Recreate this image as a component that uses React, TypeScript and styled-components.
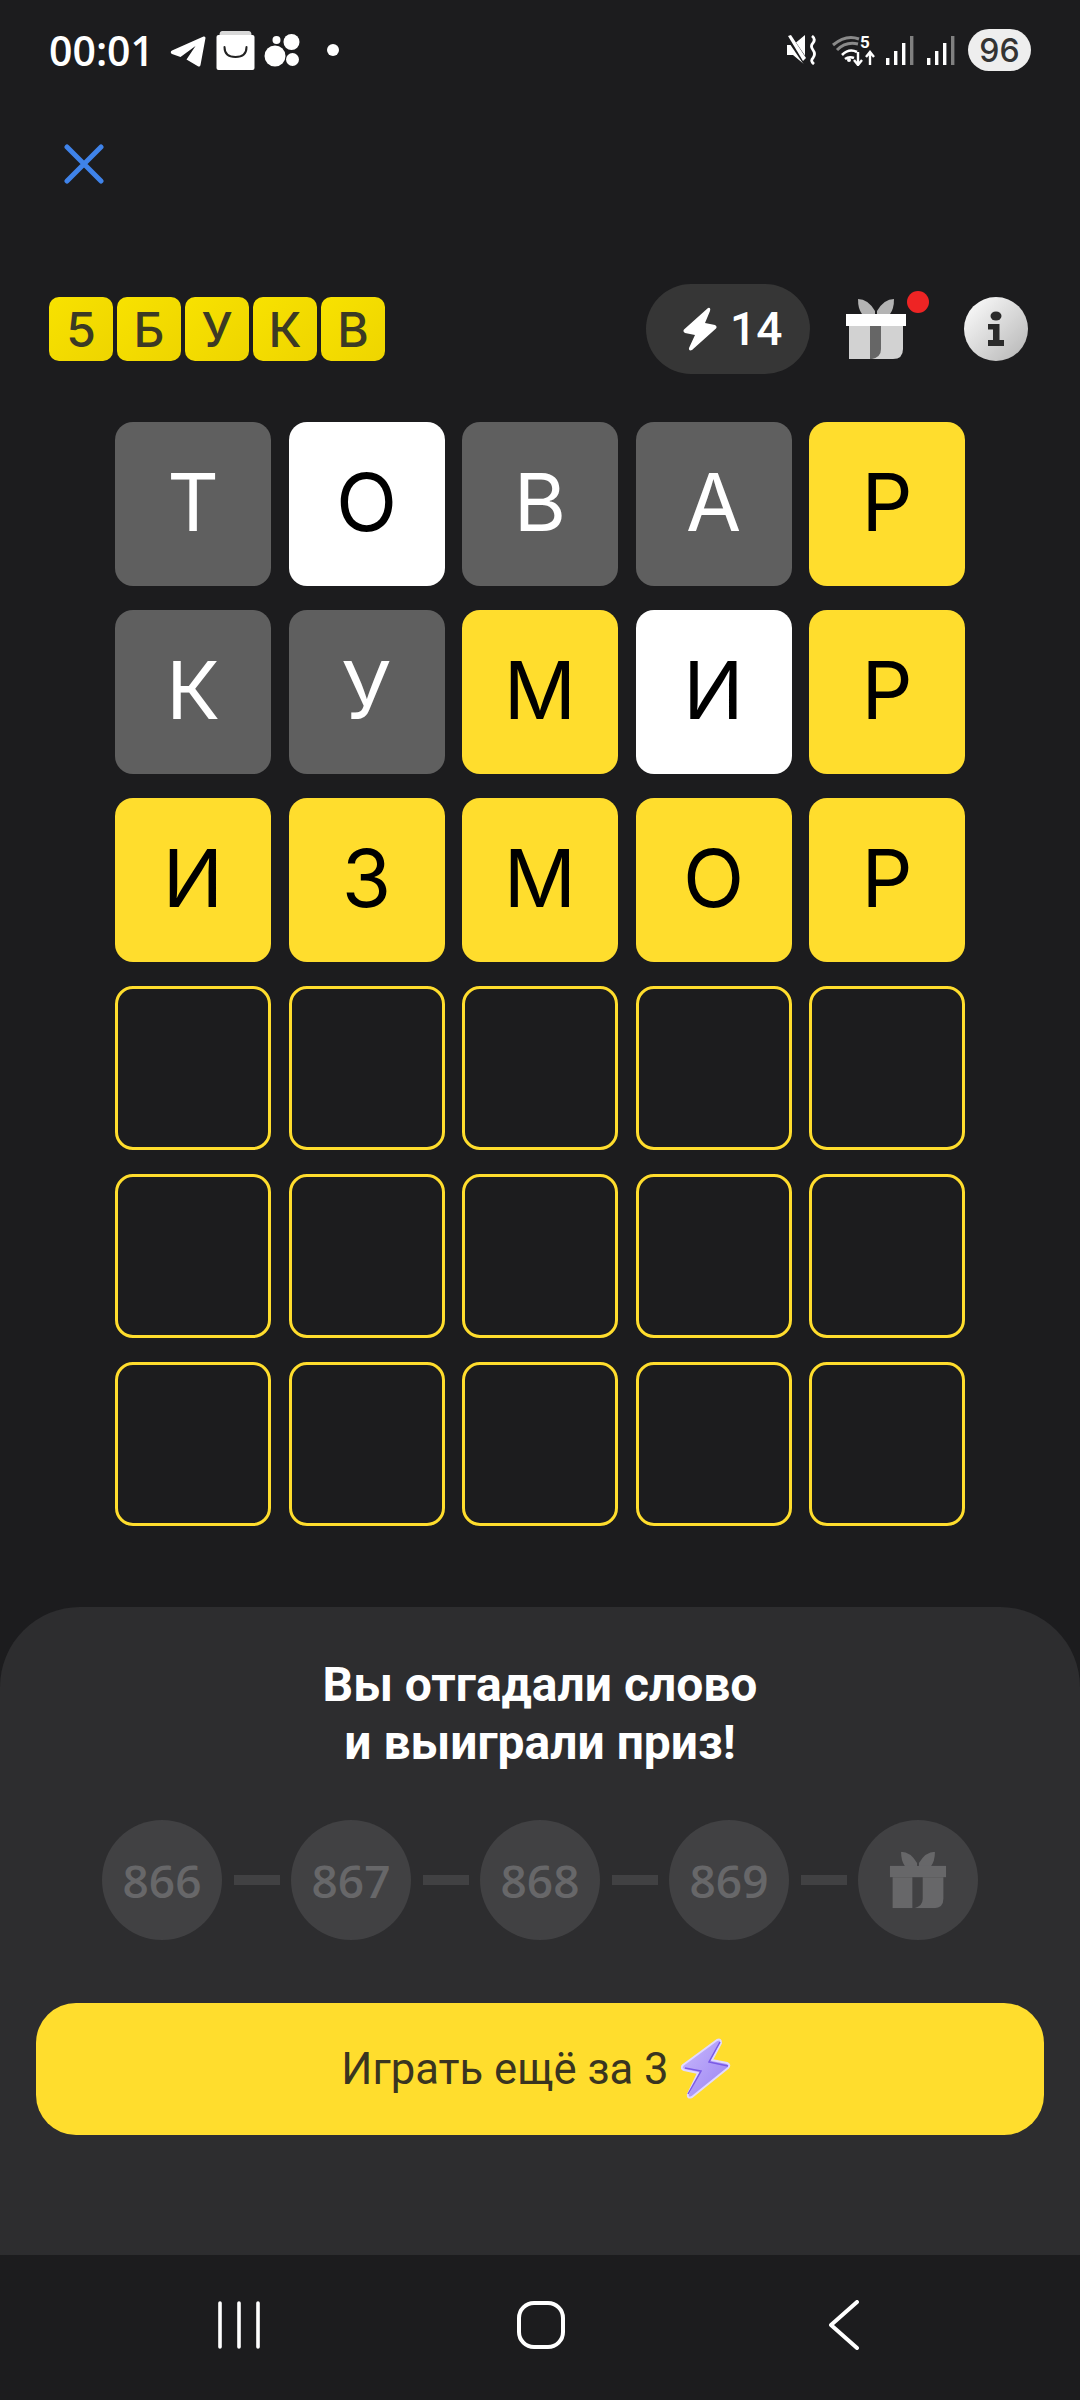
import React from 'react';
import styled, { createGlobalStyle } from 'styled-components';

type CellState = 'miss' | 'present' | 'hit' | 'empty';

type Cell = { letter: string; state: CellState };

const makeRow = (letters: string, states: CellState[]): Cell[] =>
    letters.split('').map((letter, i) => ({ letter, state: states[i] }));

const guesses: Cell[][] = [
    makeRow('ТОВАР', ['miss', 'present', 'miss', 'miss', 'hit']),
    makeRow('КУМИР', ['miss', 'miss', 'hit', 'present', 'hit']),
    makeRow('ИЗМОР', ['hit', 'hit', 'hit', 'hit', 'hit']),
];

const emptyRow: Cell[] = Array.from({ length: 5 }, () => ({ letter: '', state: 'empty' as CellState }));
const rows = [...guesses, emptyRow, emptyRow, emptyRow];

const cellBackground: Record<CellState, string> = {
    miss: '#5f5f5f',
    present: '#ffffff',
    hit: '#ffdd2d',
    empty: 'transparent',
};

function GiftIcon({ lid, box, ribbon, bow }: { lid: string; box: string; ribbon: string; bow: string }) {
    return (
        <svg width="60" height="60" viewBox="0 0 60 60">
            <path d="M12 0 Q22 0 29 12 L29 15 L16 15 Q12 10 12 0Z" fill={bow} />
            <path d="M48 0 Q38 0 31 12 L31 15 L44 15 Q48 10 48 0Z" fill={bow} />
            <rect x="0" y="15" width="60" height="12" fill={lid} />
            <path d="M3 27 H57 V50 Q57 60 47 60 H3Z" fill={box} />
            <path d="M24 27 H35 V50 Q35 58 26 60 H24Z" fill={ribbon} />
        </svg>
    );
}

function BoltIcon() {
    return (
        <svg width="34" height="44" viewBox="0 0 34 44">
            <path
                d="M25 1 Q28 0 27 4 L22 16 L32 18 Q34.5 19.5 33 21.5 L9 43 Q5.5 44.5 6 41 L12 28 L2 26 Q-.5 24.5 1 22.5Z"
                fill="#fff"
            />
        </svg>
    );
}

function PurpleBolt() {
    return (
        <svg width="50" height="62" viewBox="0 0 50 62">
            <defs>
                <linearGradient id="purple" x1="0" y1="0" x2="1" y2="1">
                    <stop offset="0" stopColor="#c9b9fc" />
                    <stop offset="1" stopColor="#9a82f2" />
                </linearGradient>
            </defs>
            <path
                d="M36 2 Q40 0 40 5 L31 22 L46 25 Q50 27 47 30 L11 59 Q6 61 7 56 L17 35 L3 32 Q-1 30 2 27Z"
                fill="url(#purple)"
                stroke="#e2d9ff"
                strokeWidth="2"
                strokeLinejoin="round"
            />
            <path d="M7 56 L20 33 L4 30 M47 28 L28 24 L39 4" fill="none" stroke="#7a5ae6" strokeWidth="1.5" />
        </svg>
    );
}

function WifiIcon() {
    return (
        <svg width="45" height="31" viewBox="0 0 45 31">
            <path d="M1 10 Q14 -1 27 4" fill="none" stroke="#8a8a8a" strokeWidth="3" />
            <path d="M5 15 Q14 6 26 9" fill="none" stroke="#8a8a8a" strokeWidth="3" />
            <path d="M10 20 Q17 13 25 17" fill="none" stroke="#fff" strokeWidth="2.6" />
            <path d="M13 24 Q17 21 22 23" fill="none" stroke="#fff" strokeWidth="2.6" />
            <circle cx="17" cy="25" r="2" fill="#fff" />
            <path d="M26 17 V29 M22 25 L26 30 L30 25" fill="none" stroke="#fff" strokeWidth="2.4" />
            <path d="M38 30 V18 M34 22 L38 17 L42 22" fill="none" stroke="#fff" strokeWidth="2.4" />
        </svg>
    );
}

function SignalIcon() {
    return (
        <svg width="28" height="29" viewBox="0 0 28 29">
            <rect x="0" y="22" width="3.4" height="7" fill="#fff" />
            <rect x="8" y="15" width="3.4" height="14" fill="#fff" />
            <rect x="16" y="7" width="3.4" height="22" fill="#fff" />
            <rect x="24" y="0" width="3.4" height="29" fill="#808080" />
        </svg>
    );
}

export default function App() {
    return (
        <Screen>
            <GlobalStyle />
            <StatusBar>
                <StatusGroup>
                    <Clock>00:01</Clock>
                    <TelegramSlot>
                        <svg width="36" height="31" viewBox="0 0 35 31">
                            <path
                                d="M33 .5 Q35 0 35 2 L30 29 Q29.5 31.5 27 30 L16 23.5 L25 10 L10 21 L1.5 18 Q-1 16 1.5 14.5Z"
                                fill="#fff"
                            />
                        </svg>
                    </TelegramSlot>
                    <IconSlot $gap={10}>
                        <svg width="39" height="39" viewBox="0 0 38 39">
                            <path d="M3 4 Q3 0 6 0 H32 Q35 0 35 4Z" fill="#d8d8d8" />
                            <rect x="0" y="4" width="38" height="35" rx="2" fill="#fff" />
                            <path d="M8 16 Q8 26 19 26 Q30 26 30 16" fill="none" stroke="#222" strokeWidth="2" strokeLinecap="round" />
                        </svg>
                    </IconSlot>
                    <IconSlot $gap={9}>
                        <svg width="36" height="34" viewBox="0 0 35 34">
                            <circle cx="10.5" cy="23" r="10.5" fill="#fff" />
                            <circle cx="27" cy="9" r="8" fill="#fff" />
                            <circle cx="28" cy="26.5" r="6.5" fill="#fff" />
                            <circle cx="12" cy="7" r="4" fill="#fff" />
                        </svg>
                    </IconSlot>
                    <StatusDot />
                </StatusGroup>
                <StatusGroup>
                    <svg width="30" height="30" viewBox="0 0 30 30">
                        <path d="M0 10 H6 L18 0 V30 L6 20 H0Z" fill="#fff" />
                        <path d="M1 1 L20 29" stroke="#1c1c1e" strokeWidth="6" />
                        <path d="M1 1 L4 0 L19 23 L16 26Z" fill="#fff" />
                        <path d="M25 1 Q29 4 26 8 Q23 11 26 15 Q29 19 26 23 Q23 26 27 29" fill="none" stroke="#fff" strokeWidth="2.8" />
                    </svg>
                    <WifiSlot>
                        <WifiIcon />
                        <WifiBand>5</WifiBand>
                    </WifiSlot>
                    <IconSlot $gap={9}>
                        <SignalIcon />
                    </IconSlot>
                    <IconSlot $gap={13}>
                        <SignalIcon />
                    </IconSlot>
                    <Battery>96</Battery>
                </StatusGroup>
            </StatusBar>

            <CloseRow>
                <svg width="40" height="40" viewBox="0 0 40 40">
                    <path d="M3 3 L37 37 M37 3 L3 37" stroke="#3f83ea" strokeWidth="5" strokeLinecap="round" />
                </svg>
            </CloseRow>

            <Header>
                <Logo>
                    {'5БУКВ'.split('').map((ch, i) => (
                        <LogoTile key={i}>{ch}</LogoTile>
                    ))}
                </Logo>
                <HeaderActions>
                    <EnergyPill>
                        <BoltIcon />
                        <span>14</span>
                    </EnergyPill>
                    <GiftButton>
                        <GiftIcon lid="#ffffff" box="#d2d2d2" ribbon="#666666" bow="#b4b4b4" />
                        <RedDot />
                    </GiftButton>
                    <InfoButton>
                        <svg width="20" height="36" viewBox="0 0 20 36">
                            <ellipse cx="10" cy="5" rx="5.5" ry="4.6" fill="#2a2a2a" />
                            <path d="M2 13 H13.5 V29 H18 V35 H2 V29 H7 V18.5 H2Z" fill="#2a2a2a" />
                        </svg>
                    </InfoButton>
                </HeaderActions>
            </Header>

            <Board>
                {rows.map((row, r) =>
                    row.map((cell, c) => (
                        <LetterCell key={`${r}-${c}`} $state={cell.state}>
                            {cell.letter}
                        </LetterCell>
                    )),
                )}
            </Board>

            <Sheet>
                <Title>
                    Вы отгадали слово
                    <br />и выиграли приз!
                </Title>
                <Steps>
                    {['866', '867', '868', '869'].map((num) => (
                        <React.Fragment key={num}>
                            <StepCircle>{num}</StepCircle>
                            <StepDash />
                        </React.Fragment>
                    ))}
                    <StepCircle>
                        <SmallGift>
                            <GiftIcon lid="#676769" box="#676769" ribbon="#414143" bow="#676769" />
                        </SmallGift>
                    </StepCircle>
                </Steps>
                <PlayButton>
                    Играть ещё за 3
                    <PurpleBolt />
                </PlayButton>
            </Sheet>

            <NavBar>
                <NavSlot $offset={218}>
                    <svg width="42" height="48" viewBox="0 0 42 48">
                        <path d="M2 2 V46 M21 2 V46 M40 2 V46" stroke="#fff" strokeWidth="3.6" strokeLinecap="round" />
                    </svg>
                </NavSlot>
                <NavSlot $offset={257}>
                    <svg width="48" height="48" viewBox="0 0 48 48">
                        <rect x="2" y="2" width="44" height="44" rx="15" fill="none" stroke="#fff" strokeWidth="4" />
                    </svg>
                </NavSlot>
                <NavSlot $offset={264}>
                    <svg width="30" height="50" viewBox="0 0 30 50">
                        <path d="M28 2 L2 25 L28 48" fill="none" stroke="#fff" strokeWidth="4" strokeLinecap="round" strokeLinejoin="round" />
                    </svg>
                </NavSlot>
            </NavBar>
        </Screen>
    );
}

const GlobalStyle = createGlobalStyle`
    html, body {
        margin: 0;
        padding: 0;
        background: #1c1c1e;
    }
    * {
        box-sizing: border-box;
    }
`;

const Screen = styled.div`
    display: flex;
    flex-direction: column;
    width: 1080px;
    height: 2400px;
    overflow: hidden;
    background: #1c1c1e;
    font-family: Roboto, sans-serif;
`;

const StatusBar = styled.div`
    display: flex;
    justify-content: space-between;
    align-items: center;
    height: 100px;
    padding: 0 49px 0 49px;
    color: #fff;
`;

const StatusGroup = styled.div`
    display: flex;
    align-items: center;
`;

const Clock = styled.span`
    width: 101px;
    font-family: 'Open Sans', sans-serif;
    font-size: 41px;
    font-weight: 600;
    white-space: nowrap;
`;

const IconSlot = styled.span<{ $gap: number }>`
    display: flex;
    margin-left: ${(p) => p.$gap}px;
`;

const TelegramSlot = styled.span`
    display: flex;
    margin: 3px 0 0 20px;
`;

const StatusDot = styled.span`
    width: 12px;
    height: 12px;
    margin-left: 27px;
    border-radius: 50%;
    background: #fff;
`;

const WifiSlot = styled.span`
    position: relative;
    display: flex;
    margin-left: 15px;
`;

const WifiBand = styled.span`
    position: absolute;
    top: -1px;
    left: 28px;
    color: #fff;
    font-size: 17px;
    font-weight: 700;
    line-height: 17px;
`;

const Battery = styled.span`
    display: flex;
    align-items: center;
    justify-content: center;
    width: 63px;
    height: 42px;
    margin-left: 13px;
    border-radius: 21px;
    background: #eeeeee;
    color: #333;
    font-family: Inter, sans-serif;
    font-size: 32px;
    font-weight: 500;
`;

const CloseRow = styled.div`
    height: 184px;
    padding: 44px 0 0 64px;
`;

const Header = styled.div`
    display: flex;
    justify-content: space-between;
    align-items: center;
    height: 90px;
    padding: 0 52px 0 49px;
`;

const Logo = styled.div`
    display: flex;
    gap: 4px;
`;

const LogoTile = styled.span`
    display: flex;
    align-items: center;
    justify-content: center;
    width: 64px;
    height: 64px;
    border-radius: 10px;
    background: linear-gradient(135deg, #f8e200, #eed500);
    color: #3c3a24;
    font-family: Inter, sans-serif;
    font-size: 48px;
    font-weight: 550;
`;

const HeaderActions = styled.div`
    display: flex;
    align-items: center;
`;

const EnergyPill = styled.div`
    display: flex;
    align-items: center;
    gap: 13px;
    width: 164px;
    height: 90px;
    padding-left: 37px;
    border-radius: 45px;
    background: #363636;
    color: #fff;
    font-size: 46px;
    font-weight: 500;
`;

const GiftButton = styled.div`
    position: relative;
    display: flex;
    margin-left: 36px;
`;

const RedDot = styled.span`
    position: absolute;
    top: -8px;
    left: 61px;
    width: 22px;
    height: 22px;
    border-radius: 50%;
    background: #ee2424;
`;

const InfoButton = styled.div`
    display: flex;
    align-items: center;
    justify-content: center;
    width: 64px;
    height: 64px;
    margin-left: 58px;
    border-radius: 50%;
    background: linear-gradient(135deg, #ffffff, #b4b4b4);
`;

const Board = styled.div`
    display: grid;
    grid-template-columns: repeat(5, 156px);
    grid-auto-rows: 164px;
    column-gap: 17.5px;
    row-gap: 24px;
    margin-top: 48px;
    padding-left: 115px;
`;

const LetterCell = styled.div<{ $state: CellState }>`
    display: flex;
    align-items: center;
    justify-content: center;
    padding-bottom: 6px;
    border-radius: 18px;
    border: ${(p) => (p.$state === 'empty' ? '3px solid #ffdd2d' : 'none')};
    background: ${(p) => cellBackground[p.$state]};
    color: ${(p) => (p.$state === 'miss' ? '#ffffff' : '#000000')};
    font-family: Inter, sans-serif;
    font-size: 80px;
    font-weight: 400;
`;

const Sheet = styled.div`
    display: flex;
    flex-direction: column;
    align-items: center;
    height: 648px;
    margin-top: 81px;
    padding: 49px 36px 0;
    border-radius: 80px 80px 0 0;
    background: #2d2d2f;
`;

const Title = styled.h1`
    margin: 0;
    color: #fff;
    font-size: 48px;
    font-weight: 700;
    line-height: 58px;
    text-align: center;
`;

const Steps = styled.div`
    display: flex;
    align-items: center;
    margin-top: 48px;
`;

const StepCircle = styled.div`
    display: flex;
    align-items: center;
    justify-content: center;
    width: 120px;
    height: 120px;
    border-radius: 50%;
    background: #414143;
    color: #676769;
    font-family: 'Open Sans', sans-serif;
    font-size: 46px;
    font-weight: 600;
`;

const StepDash = styled.div`
    width: 46px;
    height: 10px;
    margin: 0 11.5px;
    background: #414143;
`;

const SmallGift = styled.span`
    display: flex;
    transform: scale(0.94);
`;

const PlayButton = styled.button`
    display: flex;
    align-items: center;
    justify-content: center;
    gap: 12px;
    width: 1008px;
    height: 132px;
    margin-top: 63px;
    padding: 0 8px 0 0;
    border: none;
    border-radius: 40px;
    background: #ffdd2d;
    color: #3a3520;
    font-family: Roboto, sans-serif;
    font-size: 43.6px;
    font-weight: 400;
`;

const NavBar = styled.div`
    display: flex;
    align-items: center;
    height: 145px;
    padding-bottom: 5px;
`;

const NavSlot = styled.span<{ $offset: number }>`
    display: flex;
    margin-left: ${(p) => p.$offset}px;
`;
